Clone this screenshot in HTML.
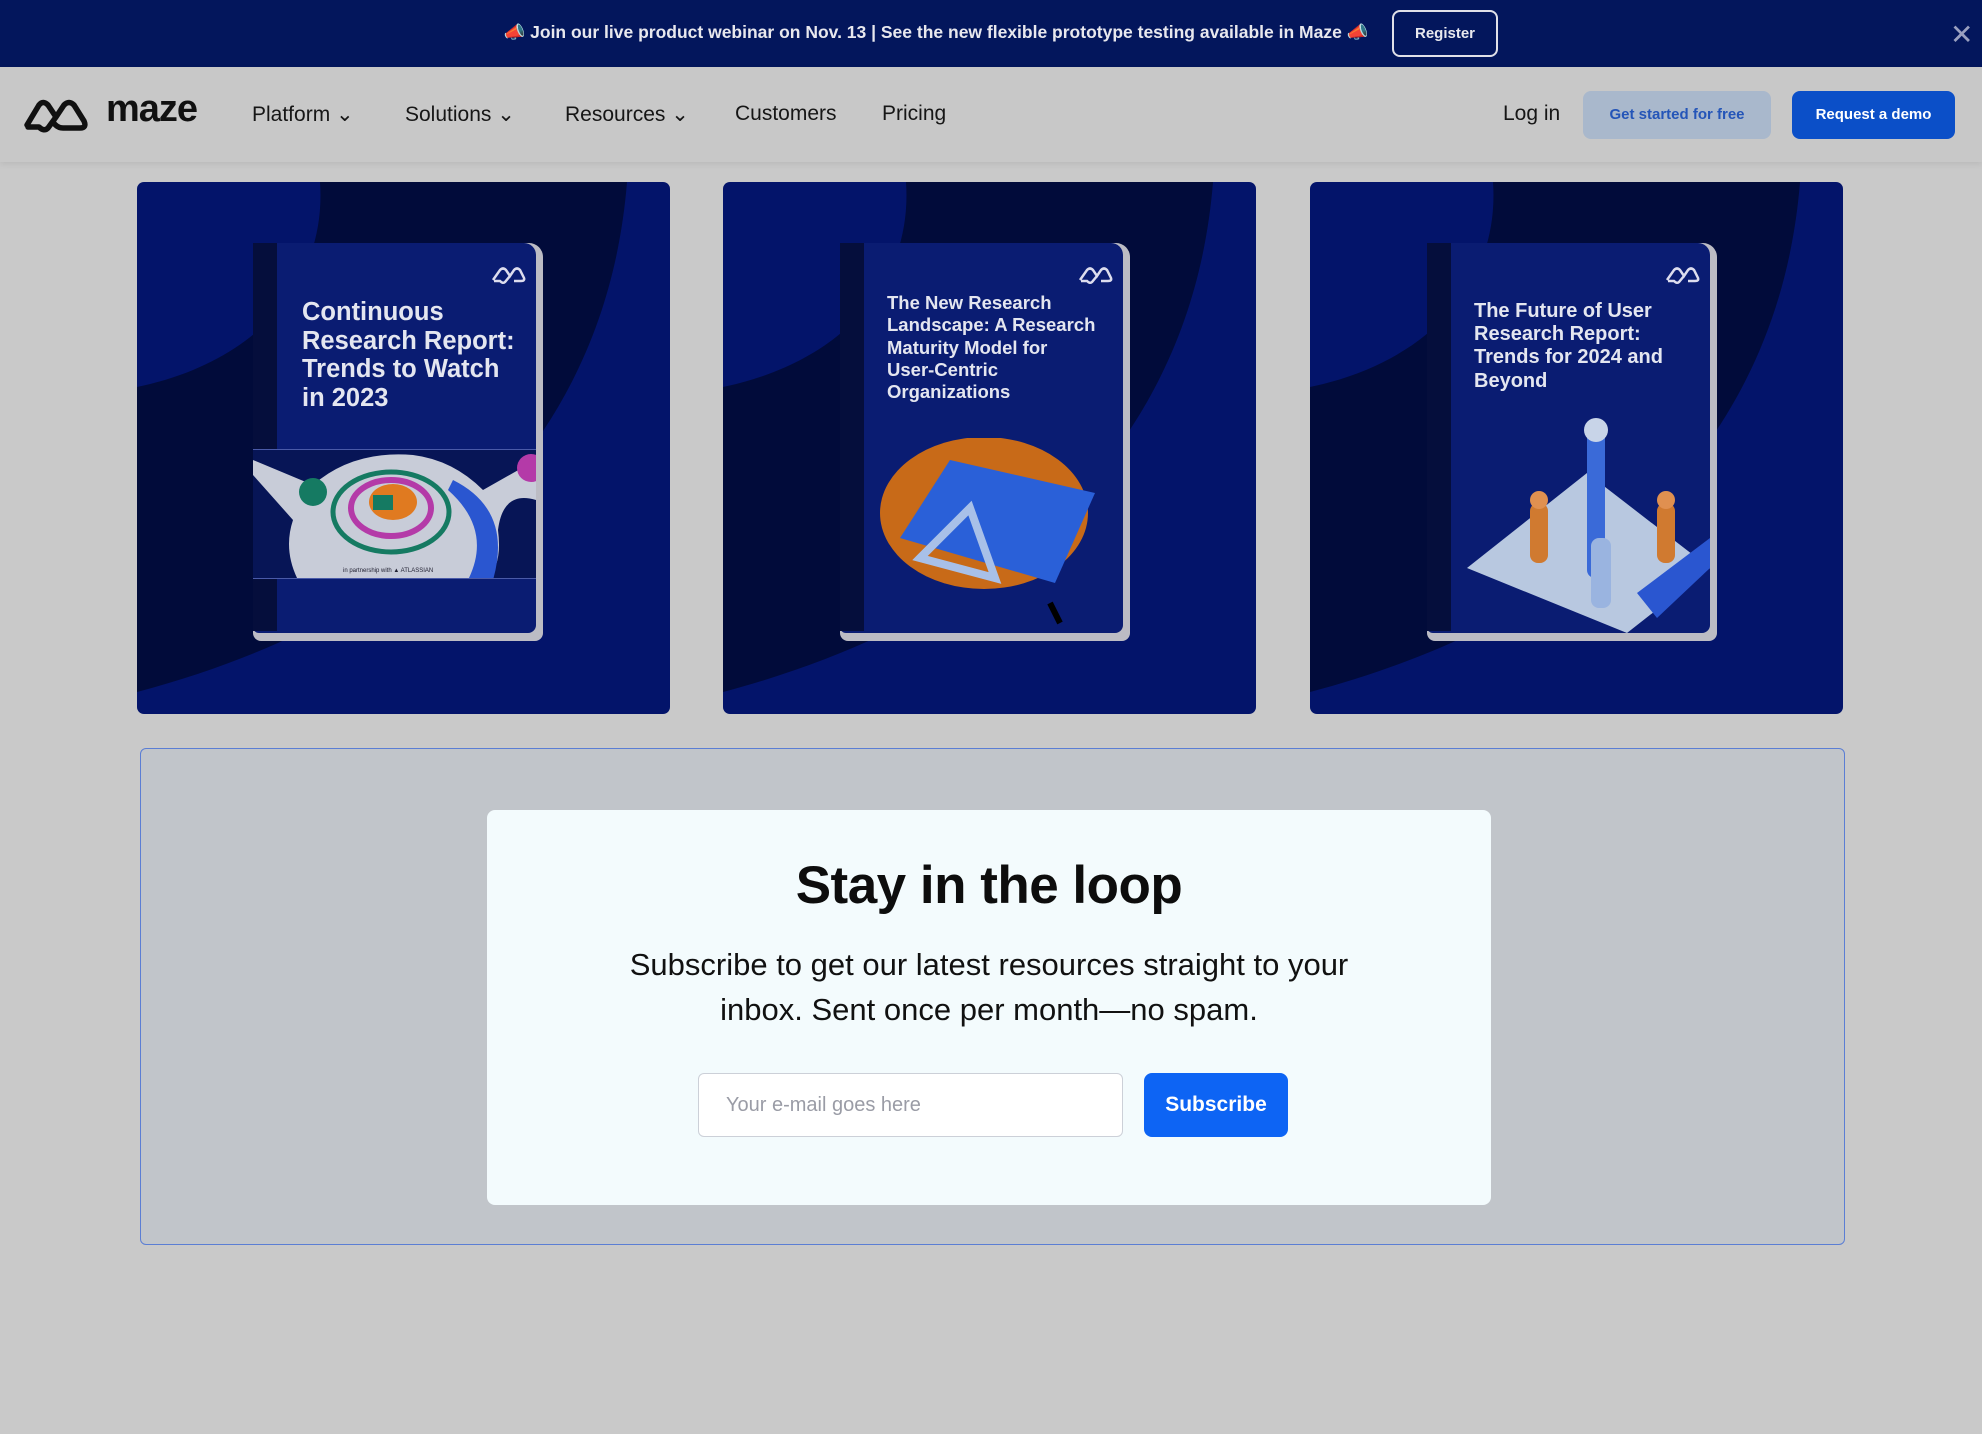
<!DOCTYPE html>
<html><head><meta charset="utf-8">
<style>
*{box-sizing:border-box;margin:0;padding:0}
body{width:1982px;height:1434px;background:#c9c9c9;font-family:"Liberation Sans",sans-serif;position:relative;overflow:hidden}
.abs{position:absolute}
.banner{left:0;top:0;width:1982px;height:67px;background:#03165c}
.banner .t{left:0;width:1982px;top:22px;text-align:center;color:#e8e8ee;font-size:17.5px;font-weight:bold;padding-right:110px}
.reg{left:1392px;top:10px;width:106px;height:47px;border:2px solid #e0e0e8;border-radius:8px;color:#e8e8ee;font-size:15px;font-weight:bold;text-align:center;line-height:43px}
.nav{left:0;top:67px;width:1982px;height:95px;background:#c8c8c8;box-shadow:0 2px 6px rgba(0,0,0,.08)}
.mi{top:102px;font-size:21px;color:#161616}
.btn{border-radius:8px;font-size:15px;font-weight:bold;text-align:center}
.card{width:533px;height:532px;border-radius:7px;overflow:hidden;top:182px;background:#03146a}
.book{left:116px;top:61px;width:297px;height:398px}
.title{color:#e4e6f0;font-weight:bold;position:absolute}
</style></head><body>
<div class="abs banner">
 <div class="abs t">📣 Join our live product webinar on Nov. 13 | See the new flexible prototype testing available in Maze 📣</div>
 <div class="abs reg">Register</div>
 <div class="abs" style="left:1950px;top:18px;color:#9aa0c0;font-size:28px">✕</div>
</div>
<div class="abs nav">
 <svg class="abs" style="left:23px;top:30px" width="66" height="36" viewBox="0 0 66 36"><path d="M4 28 L16 8 Q20 3 25 8 L33 20 L41 8 Q46 3 51 8 L61 24 Q64 31 57 31 L40 31 Q34 31 30 25 M33 20 L25 31 Q21 35 16 30 L5 30" fill="none" stroke="#111" stroke-width="5.5" stroke-linejoin="round" stroke-linecap="round"/></svg>
 <div class="abs" style="left:106px;top:21px;font-size:38px;font-weight:bold;color:#111;letter-spacing:-1px">maze</div>
</div>
<div class="abs mi" style="left:252px">Platform ⌄</div>
<div class="abs mi" style="left:405px">Solutions ⌄</div>
<div class="abs mi" style="left:565px">Resources ⌄</div>
<div class="abs mi" style="left:735px">Customers</div>
<div class="abs mi" style="left:882px">Pricing</div>
<div class="abs mi" style="left:1503px">Log in</div>
<div class="abs btn" style="left:1583px;top:91px;width:188px;height:48px;line-height:48px;background:#a9b8cc;color:#2455b8">Get started for free</div>
<div class="abs btn" style="left:1792px;top:91px;width:163px;height:48px;line-height:48px;background:#0b4fc8;color:#fff">Request a demo</div>

<!-- cards -->
<div class="abs card" style="left:137px">
 <svg class="abs" width="533" height="532"><path d="M183 0 H490 C 470 250 300 430 0 510 V 205 C 120 180 190 100 183 0 Z" fill="#010b3a"/></svg>
 <div class="abs book">
  <div class="abs" style="left:0;top:0;width:290px;height:398px;background:#bcbcc4;border-radius:6px 14px 8px 8px"></div>
  <div class="abs" style="left:0;top:0;width:283px;height:390px;background:#0a1c72;border-radius:6px 12px 8px 6px"></div>
  <div class="abs" style="left:0;top:0;width:24px;height:388px;background:#050e3c"></div>
  <svg class="abs" style="left:237px;top:22px" width="36" height="20"><path d="M3 15 L10 5 Q13 2 16 5 L20 11 L24 5 Q27 2 30 5 L34 13 Q35 16 31 16 L24 16 M20 11 L15 17 Q13 19 10 16 L4 16" fill="none" stroke="#dde" stroke-width="2.5"/></svg>
  <div class="title" style="left:49px;top:55px;font-size:25.5px;line-height:28.5px">Continuous<br>Research Report:<br>Trends to Watch<br>in 2023</div>
  <div class="abs" style="left:0;top:206px;width:283px;height:130px;background:#071556;border-top:1px solid #4a5aa8;border-bottom:1px solid #4a5aa8;overflow:hidden">
   <svg width="283" height="130"><path d="M0 10 L60 35 Q100 0 160 5 Q200 10 230 40 L283 10 V50 Q250 40 245 80 Q250 120 230 130 H45 Q30 100 40 70 L0 25Z" fill="#c8ccd8"/><path d="M200 30 Q260 60 240 130 H215 Q240 80 195 40Z" fill="#2a56d0"/><circle cx="60" cy="42" r="14" fill="#157a62"/><circle cx="278" cy="18" r="14" fill="#b43aa8"/><ellipse cx="138" cy="62" rx="58" ry="40" fill="none" stroke="#157a62" stroke-width="5"/><ellipse cx="138" cy="58" rx="40" ry="28" fill="none" stroke="#b43aa8" stroke-width="6"/><ellipse cx="140" cy="52" rx="24" ry="18" fill="#e07a20"/><path d="M120 45 h20 v15 h-20z" fill="#157a62"/><text x="90" y="122" font-size="6" fill="#223" font-family="Liberation Sans">in partnership with  ▲ ATLASSIAN</text></svg>
  </div>
 </div>
</div>
<div class="abs card" style="left:723px">
 <svg class="abs" width="533" height="532"><path d="M183 0 H490 C 470 250 300 430 0 510 V 205 C 120 180 190 100 183 0 Z" fill="#010b3a"/></svg>
 <div class="abs book" style="left:117px">
  <div class="abs" style="left:0;top:0;width:290px;height:398px;background:#bcbcc4;border-radius:6px 14px 8px 8px"></div>
  <div class="abs" style="left:0;top:0;width:283px;height:390px;background:#0a1c72;border-radius:6px 12px 8px 6px"></div>
  <div class="abs" style="left:0;top:0;width:24px;height:388px;background:#050e3c"></div>
  <svg class="abs" style="left:237px;top:22px" width="36" height="20"><path d="M3 15 L10 5 Q13 2 16 5 L20 11 L24 5 Q27 2 30 5 L34 13 Q35 16 31 16 L24 16 M20 11 L15 17 Q13 19 10 16 L4 16" fill="none" stroke="#dde" stroke-width="2.5"/></svg>
  <div class="title" style="left:47px;top:49px;font-size:18.5px;line-height:22.3px">The New Research<br>Landscape: A Research<br>Maturity Model for<br>User-Centric<br>Organizations</div>
  <svg class="abs" style="left:40px;top:195px" width="240" height="190"><ellipse cx="104" cy="75" rx="104" ry="76" fill="#c86a18"/><path d="M70 22 L215 55 L175 145 L20 100Z" fill="#2a60d8"/><path d="M40 120 L90 70 L115 140Z" fill="none" stroke="#a8c0e8" stroke-width="8"/><path d="M170 165 l10 20" stroke="#000" stroke-width="6"/></svg>
 </div>
</div>
<div class="abs card" style="left:1310px">
 <svg class="abs" width="533" height="532"><path d="M183 0 H490 C 470 250 300 430 0 510 V 205 C 120 180 190 100 183 0 Z" fill="#010b3a"/></svg>
 <div class="abs book" style="left:117px">
  <div class="abs" style="left:0;top:0;width:290px;height:398px;background:#bcbcc4;border-radius:6px 14px 8px 8px"></div>
  <div class="abs" style="left:0;top:0;width:283px;height:390px;background:#0a1c72;border-radius:6px 12px 8px 6px"></div>
  <div class="abs" style="left:0;top:0;width:24px;height:388px;background:#050e3c"></div>
  <svg class="abs" style="left:237px;top:22px" width="36" height="20"><path d="M3 15 L10 5 Q13 2 16 5 L20 11 L24 5 Q27 2 30 5 L34 13 Q35 16 31 16 L24 16 M20 11 L15 17 Q13 19 10 16 L4 16" fill="none" stroke="#dde" stroke-width="2.5"/></svg>
  <div class="title" style="left:47px;top:57px;font-size:20px;line-height:23.2px">The Future of User<br>Research Report:<br>Trends for 2024 and<br>Beyond</div>
  <svg class="abs" style="left:40px;top:175px" width="243" height="215"><path d="M0 150 L120 55 L243 150 L160 215 Z" fill="#b8c8e0"/><path d="M170 175 L243 120 V150 L190 200Z" fill="#2a56d0"/><rect x="120" y="10" width="18" height="150" rx="8" fill="#3a6ad8"/><circle cx="129" cy="12" r="12" fill="#c8d4e8"/><rect x="124" y="120" width="20" height="70" rx="8" fill="#9ab4e0"/><rect x="63" y="85" width="18" height="60" rx="8" fill="#d07a30"/><circle cx="72" cy="82" r="9" fill="#e09050"/><rect x="190" y="85" width="18" height="60" rx="8" fill="#d07a30"/><circle cx="199" cy="82" r="9" fill="#e09050"/></svg>
 </div>
</div>

<!-- subscribe -->
<div class="abs" style="left:140px;top:748px;width:1705px;height:497px;border:1.5px solid #5b7ed4;border-radius:6px;background:#c1c5ca"></div>
<div class="abs" style="left:487px;top:810px;width:1004px;height:395px;background:#f3fbfd;border-radius:8px"></div>
<div class="abs" style="left:487px;top:855px;width:1004px;text-align:center;font-size:53px;font-weight:bold;color:#0d0d0d;letter-spacing:-0.5px">Stay in the loop</div>
<div class="abs" style="left:487px;top:942px;width:1004px;text-align:center;font-size:31px;line-height:45px;color:#111">Subscribe to get our latest resources straight to your<br>inbox. Sent once per month—no spam.</div>
<div class="abs" style="left:698px;top:1073px;width:425px;height:64px;background:#fff;border:1px solid #ccd0d8;border-radius:6px;font-size:20px;color:#9a9ca6;line-height:62px;padding-left:27px">Your e-mail goes here</div>
<div class="abs" style="left:1144px;top:1073px;width:144px;height:64px;background:#0d64f4;border-radius:8px;color:#fff;font-size:21px;font-weight:bold;text-align:center;line-height:64px">Subscribe</div>
</body></html>
